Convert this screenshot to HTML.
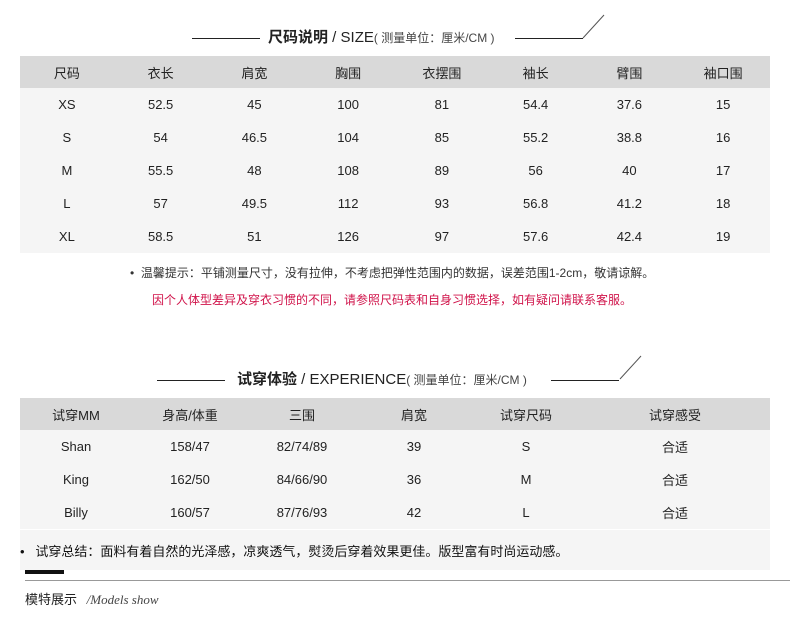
<!DOCTYPE html>
<html><head><meta charset="utf-8"><style>
*{margin:0;padding:0;box-sizing:border-box}
body{width:790px;height:633px;background:#fff;font-family:"Liberation Sans","Noto Sans CJK SC",sans-serif;color:#222;position:relative;overflow:hidden;font-size:13px}
.abs{position:absolute}
.hl{position:absolute;height:1px;background:#222}
table{position:absolute;border-collapse:collapse;table-layout:fixed}
td{text-align:center;height:33px;padding:0;font-size:13px;color:#222}
tr.h td{background:#d9d9d9;height:32px}
tr.r td{background:#f5f5f5}
.title{position:absolute;white-space:nowrap;font-size:15px;line-height:20px}
.title b{font-weight:bold}
.title small{font-size:12px;color:#444}
</style></head><body>
<div class="hl" style="left:192px;top:38px;width:68px"></div>
<div class="title" style="left:268px;top:28px"><b>尺码说明</b> / SIZE<small>( 测量单位：厘米/CM )</small></div>
<div class="hl" style="left:515px;top:38px;width:68px"></div>
<svg class="abs" style="left:582px;top:14px" width="24" height="26"><line x1="1" y1="24" x2="22" y2="1" stroke="#555" stroke-width="1"/></svg>

<table style="left:20px;top:56px;width:750px">
<tr class="h"><td>尺码</td><td>衣长</td><td>肩宽</td><td>胸围</td><td>衣摆围</td><td>袖长</td><td>臂围</td><td>袖口围</td></tr>
<tr class="r"><td>XS</td><td>52.5</td><td>45</td><td>100</td><td>81</td><td>54.4</td><td>37.6</td><td>15</td></tr>
<tr class="r"><td>S</td><td>54</td><td>46.5</td><td>104</td><td>85</td><td>55.2</td><td>38.8</td><td>16</td></tr>
<tr class="r"><td>M</td><td>55.5</td><td>48</td><td>108</td><td>89</td><td>56</td><td>40</td><td>17</td></tr>
<tr class="r"><td>L</td><td>57</td><td>49.5</td><td>112</td><td>93</td><td>56.8</td><td>41.2</td><td>18</td></tr>
<tr class="r"><td>XL</td><td>58.5</td><td>51</td><td>126</td><td>97</td><td>57.6</td><td>42.4</td><td>19</td></tr>
</table>

<div class="abs" style="left:130px;top:264px;font-size:12px;color:#333;white-space:nowrap">•&nbsp;&nbsp;温馨提示：平铺测量尺寸，没有拉伸，不考虑把弹性范围内的数据，误差范围1-2cm，敬请谅解。</div>
<div class="abs" style="left:0;width:784px;text-align:center;top:291px;font-size:12px;color:#d0134a;white-space:nowrap">因个人体型差异及穿衣习惯的不同，请参照尺码表和自身习惯选择，如有疑问请联系客服。</div>

<div class="hl" style="left:157px;top:380px;width:68px"></div>
<div class="title" style="left:237px;top:370px"><b>试穿体验</b> / EXPERIENCE<small>( 测量单位：厘米/CM )</small></div>
<div class="hl" style="left:551px;top:380px;width:68px"></div>
<svg class="abs" style="left:619px;top:355px" width="24" height="26"><line x1="1" y1="24" x2="22" y2="1" stroke="#555" stroke-width="1"/></svg>

<table style="left:20px;top:398px;width:750px">
<colgroup><col style="width:112px"><col style="width:116px"><col style="width:108px"><col style="width:116px"><col style="width:108px"><col style="width:190px"></colgroup>
<tr class="h"><td>试穿MM</td><td>身高/体重</td><td>三围</td><td>肩宽</td><td>试穿尺码</td><td>试穿感受</td></tr>
<tr class="r"><td>Shan</td><td>158/47</td><td>82/74/89</td><td>39</td><td>S</td><td>合适</td></tr>
<tr class="r"><td>King</td><td>162/50</td><td>84/66/90</td><td>36</td><td>M</td><td>合适</td></tr>
<tr class="r"><td>Billy</td><td>160/57</td><td>87/76/93</td><td>42</td><td>L</td><td>合适</td></tr>
</table>
<div class="abs" style="left:20px;top:530px;width:750px;height:40px;background:#f5f5f5"></div>
<div class="abs" style="left:20px;top:541px;font-size:13px;color:#111;white-space:nowrap">•&nbsp;&nbsp;&nbsp;试穿总结：面料有着自然的光泽感，凉爽透气，熨烫后穿着效果更佳。版型富有时尚运动感。</div>
<div class="abs" style="left:25px;top:570px;width:39px;height:4px;background:#111"></div>
<div class="abs" style="left:25px;top:580px;width:765px;height:1px;background:#999"></div>
<div class="abs" style="left:25px;top:589px;font-size:13px;color:#222;white-space:nowrap">模特展示 <span style="font-family:'Liberation Serif',serif;font-style:italic;color:#444;margin-left:6px">/Models show</span></div>
</body></html>
